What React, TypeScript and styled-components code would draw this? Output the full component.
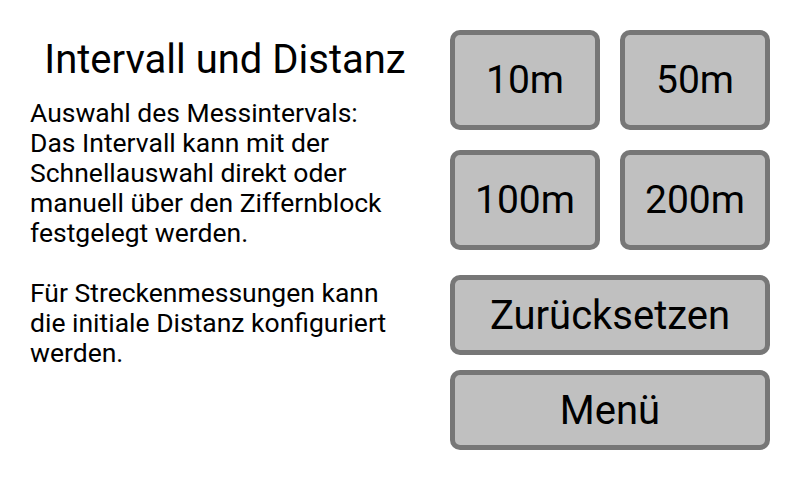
import React from 'react';
import styled, { createGlobalStyle } from 'styled-components';

const GlobalStyle = createGlobalStyle`
  html, body {
    margin: 0;
    padding: 0;
    background: #ffffff;
  }
  body {
    font-family: Roboto, 'Noto Sans', sans-serif;
    color: #000000;
  }
`;

const Screen = styled.div`
  width: 800px;
  height: 480px;
  display: grid;
  grid-template-columns: 450px 320px;
  overflow: hidden;
  background: #ffffff;
`;

const InfoColumn = styled.div`
  display: flex;
  flex-direction: column;
  padding-top: 37px;
`;

const Title = styled.h1`
  margin: 0;
  font-size: 40px;
  font-weight: 400;
  line-height: 46px;
  text-align: center;
`;

const Description = styled.div`
  margin-top: 15px;
  padding-left: 30px;
  font-size: 26.5px;
  line-height: 30px;
`;

const Paragraph = styled.p`
  margin: 0 0 30px 0;
`;

const Line = styled.span`
  display: block;
  white-space: nowrap;
`;

const ButtonColumn = styled.div`
  display: flex;
  flex-direction: column;
  padding-top: 30px;
`;

const QuickGrid = styled.div`
  display: grid;
  grid-template-columns: 150px 150px;
  grid-auto-rows: 100px;
  gap: 20px;
  margin-bottom: 25px;
`;

const ActionStack = styled.div`
  display: flex;
  flex-direction: column;
  gap: 15px;
`;

const Button = styled.button<{ $tall?: boolean }>`
  box-sizing: border-box;
  height: ${(p) => (p.$tall ? '100px' : '80px')};
  margin: 0;
  padding: 0;
  border: 5px solid #777777;
  border-radius: 10px;
  background: #c0c0c0;
  color: #000000;
  font-family: Roboto, 'Noto Sans', sans-serif;
  font-size: ${(p) => (p.$tall ? '39px' : '40px')};
  font-weight: 400;
  display: flex;
  align-items: center;
  justify-content: center;
`;

const intervals = ['10m', '50m', '100m', '200m'];

export default function App() {
  return (
    <>
      <GlobalStyle />
      <Screen>
        <InfoColumn>
          <Title>Intervall und Distanz</Title>
          <Description>
            <Paragraph>
              <Line>Auswahl des Messintervals:</Line>
              <Line>Das Intervall kann mit der</Line>
              <Line>Schnellauswahl direkt oder</Line>
              <Line>manuell über den Ziffernblock</Line>
              <Line>festgelegt werden.</Line>
            </Paragraph>
            <Paragraph>
              <Line>Für Streckenmessungen kann</Line>
              <Line>die initiale Distanz konfiguriert</Line>
              <Line>werden.</Line>
            </Paragraph>
          </Description>
        </InfoColumn>
        <ButtonColumn>
          <QuickGrid>
            {intervals.map((label) => (
              <Button key={label} $tall>
                {label}
              </Button>
            ))}
          </QuickGrid>
          <ActionStack>
            <Button>Zurücksetzen</Button>
            <Button>Menü</Button>
          </ActionStack>
        </ButtonColumn>
      </Screen>
    </>
  );
}
